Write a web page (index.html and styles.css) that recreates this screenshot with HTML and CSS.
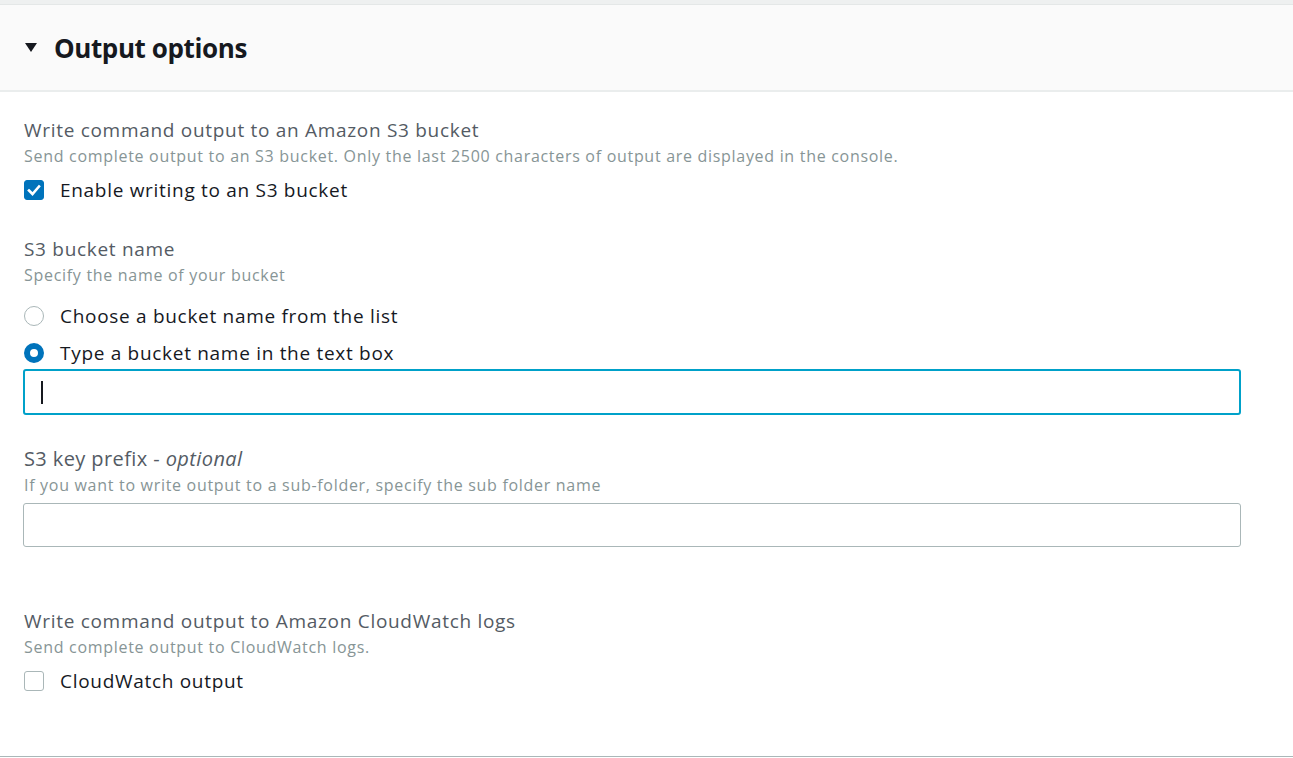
FILE: index.html
```html
<!DOCTYPE html>
<html>
<head>
<meta charset="utf-8">
<link rel="stylesheet" href="styles.css">
</head>
<body>
<div class="panel">
  <div class="panel-header">
    <svg class="caret-icon" width="14" height="12" viewBox="0 0 14 12"><polygon points="1,2 13,2 7,11" fill="#16191f"/></svg>
    <h2 class="panel-title">Output options</h2>
  </div>
  <div class="panel-body">
    <div class="field first">
      <div class="label">Write command output to an Amazon S3 bucket</div>
      <div class="desc">Send complete output to an S3 bucket. Only the last 2500 characters of output are displayed in the console.</div>
      <div class="option cb-row">
        <span class="checkbox checked">
          <svg width="20" height="20" viewBox="0 0 20 20"><polyline points="5,10.5 8.5,14 15,6.5" fill="none" stroke="#fff" stroke-width="2.6" stroke-linecap="square"/></svg>
        </span>
        <span class="opt-label">Enable writing to an S3 bucket</span>
      </div>
    </div>

    <div class="field bucket">
      <div class="label">S3 bucket name</div>
      <div class="desc">Specify the name of your bucket</div>
      <div class="option radio-row first-radio">
        <span class="radio"></span>
        <span class="opt-label">Choose a bucket name from the list</span>
      </div>
      <div class="option radio-row second-radio">
        <span class="radio checked"></span>
        <span class="opt-label">Type a bucket name in the text box</span>
      </div>
      <div class="input focused"><span class="text-caret"></span></div>
    </div>

    <div class="field prefix">
      <div class="label alt">S3 key prefix - <i>optional</i></div>
      <div class="desc">If you want to write output to a sub-folder, specify the sub folder name</div>
      <div class="input plain"></div>
    </div>

    <div class="field cloudwatch">
      <div class="label">Write command output to Amazon CloudWatch logs</div>
      <div class="desc">Send complete output to CloudWatch logs.</div>
      <div class="option cb-row">
        <span class="checkbox"></span>
        <span class="opt-label">CloudWatch output</span>
      </div>
    </div>
  </div>
</div>
</body>
</html>
```
FILE: styles.css
```css
html, body {
  margin: 0;
  padding: 0;
  background: #ffffff;
}
body {
  font-family: "Open Sans", "Noto Sans", "Liberation Sans", sans-serif;
  color: #16191f;
  width: 1293px;
  height: 758px;
  overflow: hidden;
}
.panel {
  border-top: 4px solid #eef0f0;
  border-bottom: 1px solid #aab7b8;
}
.panel-header {
  background: #fafafa;
  border-top: 1px solid #e4e7e7;
  border-bottom: 2px solid #eaeded;
  display: flex;
  align-items: center;
  padding: 0 24px 0 24px;
  box-sizing: border-box;
  height: 88px;
}
.caret-icon {
  display: block;
  margin-right: 16px;
  margin-top: -2px;
}
.panel-title {
  margin: 0;
  font-size: 26px;
  font-weight: 700;
  color: #16191f;
  letter-spacing: -0.4px;
  line-height: 30px;
}
.panel-body {
  padding: 25px 52px 60px 24px;
}
.label {
  font-size: 19px;
  line-height: 26px;
  letter-spacing: 0.7px;
  color: #545b64;
}
.desc {
  font-size: 16px;
  line-height: 26px;
  letter-spacing: 0.7px;
  color: #879596;
}
.label.alt {
  font-size: 20px;
  letter-spacing: 0.4px;
}
.option {
  display: flex;
  align-items: center;
  height: 30px;
}
.opt-label {
  font-size: 19px;
  letter-spacing: 0.7px;
  color: #16191f;
  margin-left: 16px;
}
.cb-row {
  margin-top: 6px;
}
.checkbox {
  width: 20px;
  height: 20px;
  box-sizing: border-box;
  border: 1px solid #aab7b8;
  border-radius: 3px;
  background: #fff;
  display: block;
  flex: none;
}
.checkbox.checked {
  background: #0073bb;
  border-color: #0073bb;
}
.checkbox svg {
  display: block;
  margin: -1px;
}
.radio {
  width: 20px;
  height: 20px;
  box-sizing: border-box;
  border: 1px solid #aab7b8;
  border-radius: 50%;
  background: #fff;
  display: block;
  flex: none;
}
.radio.checked {
  border: 6px solid #0073bb;
}
.field.bucket {
  margin-top: 31px;
}
.first-radio {
  margin-top: 13px;
}
.second-radio {
  margin-top: 7px;
}
.input {
  box-sizing: border-box;
  width: 1218px;
  margin-left: -1px;
  border-radius: 3px;
  background: #fff;
  display: flex;
  align-items: center;
}
.input.focused {
  height: 46px;
  margin-top: 1px;
  border: 2px solid #00a1c9;
  padding-left: 16px;
}
.text-caret {
  display: block;
  width: 2px;
  height: 23px;
  background: #16191f;
}
.input.plain {
  height: 44px;
  margin-top: 5px;
  border: 1px solid #aab7b8;
}
.field.prefix {
  margin-top: 31px;
}
.field.cloudwatch {
  margin-top: 61px;
}
```
